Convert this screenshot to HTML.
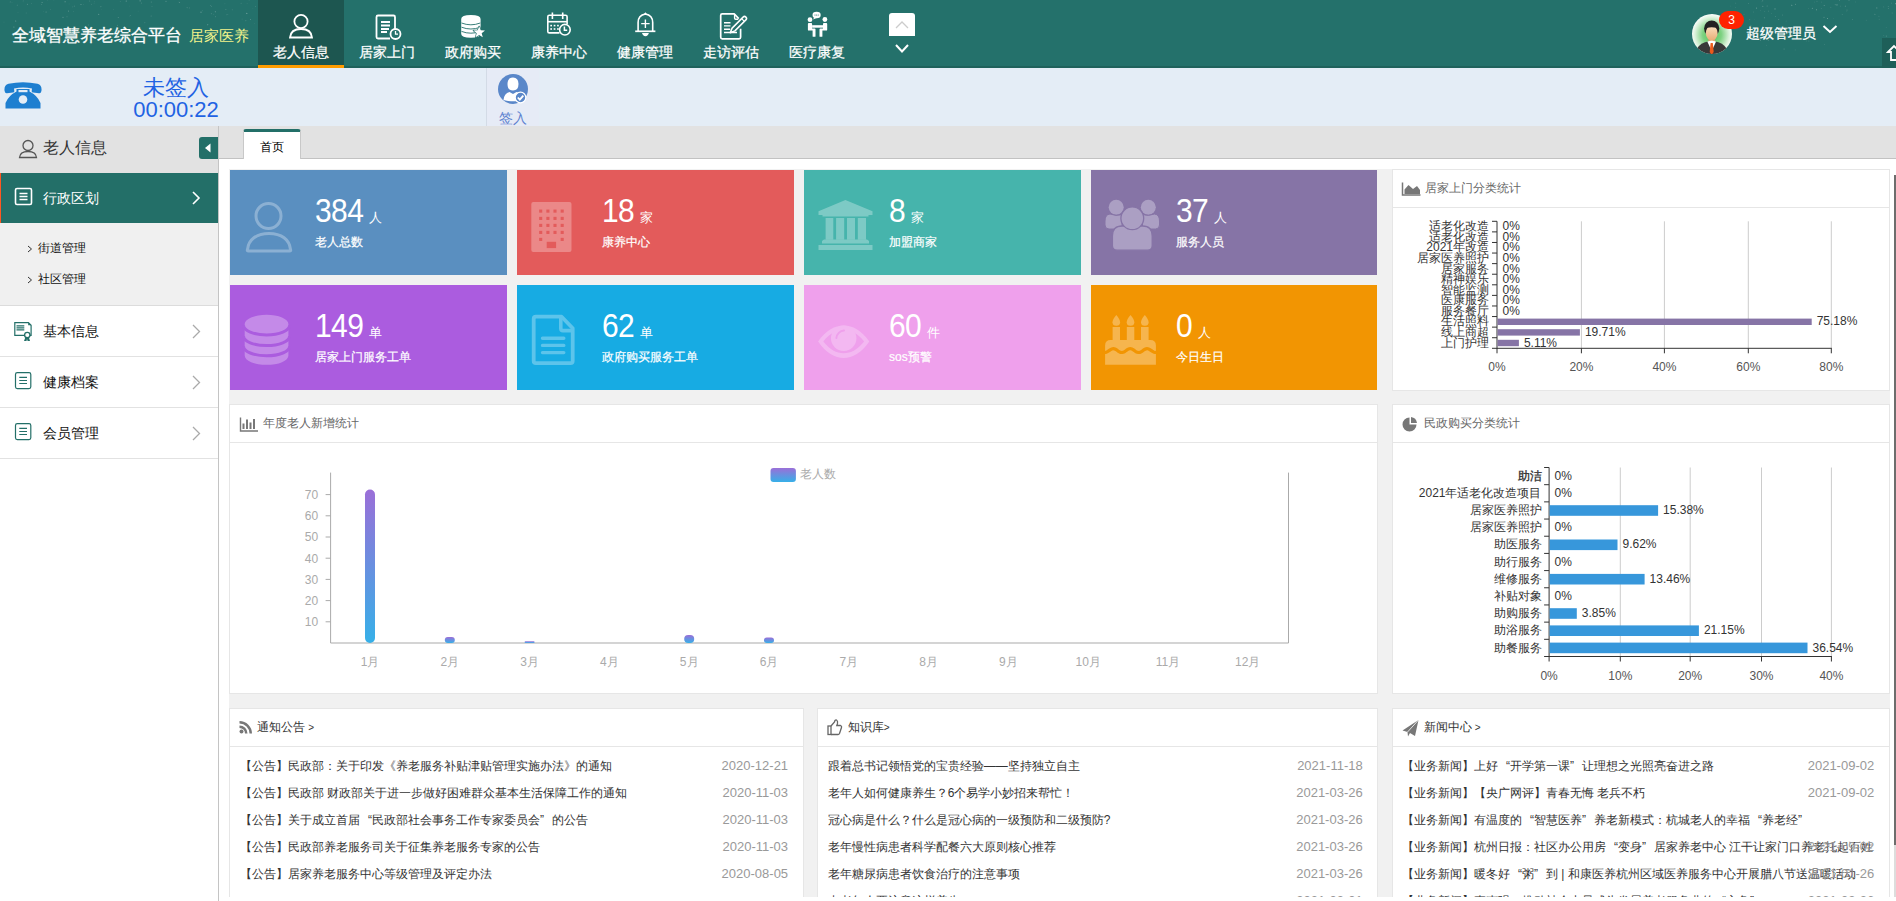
<!DOCTYPE html>
<html><head><meta charset="utf-8">
<style>
*{box-sizing:border-box;margin:0;padding:0}
html,body{width:1896px;height:901px;overflow:hidden;background:#fff;font-family:"Liberation Sans",sans-serif;color:#333}
.a{position:absolute}
#hdr{left:0;top:0;width:1896px;height:68px;background:#24716b;overflow:hidden}
#hdr .bl{left:0;top:66px;width:1896px;height:2px;background:#1f625c}
.nav{top:0;height:68px;width:86px;color:#fff;font-size:14px;text-align:center}
.nav.on{background:#1d5650;border-bottom:3px solid #ff9c00}
.nav span{position:absolute;left:0;width:86px;top:42px;line-height:20px;-webkit-text-stroke:0.25px #fff}
.nav svg{position:absolute;left:0;top:0}
#sub{left:0;top:68px;width:1896px;height:58px;background:#e4edf6}
#tabbar{left:219px;top:126px;width:1677px;height:33px;background:#e2e2e2;border-bottom:1px solid #c2c2c2}
#side{left:0;top:126px;width:219px;height:775px;background:#fff;border-right:1px solid #c4c4c4}
#content{left:219px;top:159px;width:1677px;height:738px;background:#fff;overflow:hidden}
.grey{background:#f1f1f1}
.card{color:#fff;overflow:hidden}
.card .num{position:absolute;left:85px;top:25px;font-size:30px;line-height:34px;white-space:nowrap;letter-spacing:-0.6px}
.card .num i{font-style:normal;display:inline-block;transform:scaleY(1.1);transform-origin:0 27px}
.card .num small{font-size:13px;margin-left:6px;letter-spacing:0}
.card .lbl{position:absolute;left:85px;top:63px;font-size:12px;line-height:18px;white-space:nowrap;-webkit-text-stroke:0.2px #fff}
.card svg{position:absolute;left:0;top:0}
.panel{background:#fff;border:1px solid #e6e6e6;overflow:hidden}
.ph{position:absolute;left:0;top:0;right:0;height:38px;border-bottom:1px solid #e6e6e6;font-size:12px;color:#666;line-height:37px;white-space:nowrap}
q1,q2{display:inline-block}
q1{padding-left:8px}q2{padding-right:8px}
.ph svg{position:absolute}
.ph b{font-weight:normal;position:absolute;top:0}
.li{position:absolute;font-size:12px;line-height:16px;white-space:nowrap;color:#333}
.dt{position:absolute;font-size:13px;line-height:16px;color:#999;text-align:right;white-space:nowrap}
.menu{position:absolute;left:0;width:218px;height:51px;border-bottom:1px solid #e2e2e2;font-size:14px;color:#111}
.menu span{position:absolute;left:43px;top:16px;line-height:18px}
.menu svg{position:absolute;left:0;top:0}
</style></head><body>

<!-- HEADER -->
<div id="hdr" class="a">
  <div class="a bl"></div>
  <div id="stars"><svg class="a" style="left:0;top:0" width="1896" height="66"><g fill="#fff"><circle cx="83.5" cy="4.5" r="0.32" fill-opacity="0.25"/><circle cx="94.3" cy="1.7" r="0.31" fill-opacity="0.22"/><circle cx="18.0" cy="12.4" r="0.34" fill-opacity="0.17"/><circle cx="161.9" cy="28.4" r="0.42" fill-opacity="0.35"/><circle cx="12.0" cy="2.2" r="0.34" fill-opacity="0.19"/><circle cx="210.6" cy="5.4" r="0.49" fill-opacity="0.21"/><circle cx="141.3" cy="3.1" r="0.50" fill-opacity="0.22"/><circle cx="81.0" cy="4.5" r="0.54" fill-opacity="0.29"/><circle cx="63.0" cy="17.2" r="0.56" fill-opacity="0.29"/><circle cx="74.3" cy="6.3" r="0.52" fill-opacity="0.16"/><circle cx="126.2" cy="1.2" r="0.53" fill-opacity="0.26"/><circle cx="225.9" cy="9.4" r="0.48" fill-opacity="0.26"/><circle cx="117.7" cy="25.2" r="0.44" fill-opacity="0.28"/><circle cx="15.7" cy="21.0" r="0.60" fill-opacity="0.32"/><circle cx="73.4" cy="11.6" r="0.31" fill-opacity="0.23"/><circle cx="43.4" cy="11.5" r="0.34" fill-opacity="0.18"/><circle cx="100.9" cy="6.7" r="0.46" fill-opacity="0.33"/><circle cx="211.4" cy="6.2" r="0.41" fill-opacity="0.33"/><circle cx="247.1" cy="3.5" r="0.37" fill-opacity="0.23"/><circle cx="152.0" cy="6.3" r="0.41" fill-opacity="0.26"/><circle cx="245.9" cy="20.7" r="0.49" fill-opacity="0.28"/><circle cx="13.9" cy="27.0" r="0.56" fill-opacity="0.31"/><circle cx="101.2" cy="9.5" r="0.32" fill-opacity="0.14"/><circle cx="53.9" cy="0.8" r="0.30" fill-opacity="0.16"/><circle cx="26.2" cy="13.1" r="0.49" fill-opacity="0.16"/><circle cx="65.1" cy="1.8" r="0.55" fill-opacity="0.36"/><circle cx="120.2" cy="1.5" r="0.41" fill-opacity="0.19"/><circle cx="213.8" cy="14.3" r="0.46" fill-opacity="0.16"/><circle cx="140.1" cy="0.8" r="0.59" fill-opacity="0.33"/><circle cx="179.6" cy="2.5" r="0.53" fill-opacity="0.25"/><circle cx="201.0" cy="12.2" r="0.59" fill-opacity="0.32"/><circle cx="208.0" cy="24.5" r="0.37" fill-opacity="0.25"/><circle cx="91.7" cy="4.2" r="0.38" fill-opacity="0.29"/><circle cx="246.8" cy="13.4" r="0.60" fill-opacity="0.35"/><circle cx="94.1" cy="3.0" r="0.36" fill-opacity="0.27"/><circle cx="232.3" cy="9.8" r="0.54" fill-opacity="0.14"/><circle cx="170.4" cy="27.3" r="0.52" fill-opacity="0.23"/><circle cx="46.1" cy="12.0" r="0.59" fill-opacity="0.22"/><circle cx="103.6" cy="28.4" r="0.35" fill-opacity="0.15"/><circle cx="39.0" cy="27.1" r="0.35" fill-opacity="0.32"/><circle cx="252.9" cy="8.2" r="0.34" fill-opacity="0.13"/><circle cx="250.5" cy="19.5" r="0.58" fill-opacity="0.22"/><circle cx="224.9" cy="3.8" r="0.39" fill-opacity="0.18"/><circle cx="151.3" cy="2.0" r="0.57" fill-opacity="0.20"/><circle cx="118.2" cy="17.5" r="0.43" fill-opacity="0.34"/><circle cx="129.4" cy="16.0" r="0.31" fill-opacity="0.23"/><circle cx="47.2" cy="0.1" r="0.35" fill-opacity="0.23"/><circle cx="187.1" cy="7.8" r="0.46" fill-opacity="0.31"/><circle cx="27.4" cy="4.2" r="0.53" fill-opacity="0.24"/><circle cx="144.9" cy="22.8" r="0.43" fill-opacity="0.27"/><circle cx="130.4" cy="15.4" r="0.43" fill-opacity="0.25"/><circle cx="123.3" cy="28.2" r="0.56" fill-opacity="0.35"/><circle cx="67.0" cy="16.8" r="0.55" fill-opacity="0.15"/><circle cx="31.4" cy="3.6" r="0.32" fill-opacity="0.28"/><circle cx="202.3" cy="10.7" r="0.49" fill-opacity="0.16"/><circle cx="227.8" cy="14.3" r="0.42" fill-opacity="0.23"/><circle cx="255.4" cy="6.5" r="0.46" fill-opacity="0.20"/><circle cx="50.5" cy="9.6" r="0.31" fill-opacity="0.25"/><circle cx="113.6" cy="9.4" r="0.45" fill-opacity="0.14"/><circle cx="254.2" cy="23.7" r="0.33" fill-opacity="0.19"/><circle cx="10.2" cy="1.9" r="0.43" fill-opacity="0.34"/><circle cx="211.3" cy="13.8" r="0.47" fill-opacity="0.29"/><circle cx="23.1" cy="1.7" r="0.43" fill-opacity="0.14"/><circle cx="242.1" cy="19.0" r="0.32" fill-opacity="0.32"/><circle cx="17.2" cy="5.1" r="0.46" fill-opacity="0.34"/><circle cx="69.1" cy="3.9" r="0.38" fill-opacity="0.14"/><circle cx="41.7" cy="4.7" r="0.39" fill-opacity="0.30"/><circle cx="74.8" cy="5.2" r="0.31" fill-opacity="0.18"/><circle cx="4.0" cy="22.0" r="0.36" fill-opacity="0.23"/><circle cx="241.1" cy="3.2" r="0.43" fill-opacity="0.24"/><circle cx="215.3" cy="11.8" r="0.51" fill-opacity="0.35"/><circle cx="88.4" cy="25.0" r="0.49" fill-opacity="0.22"/><circle cx="89.7" cy="1.1" r="0.52" fill-opacity="0.18"/><circle cx="42.1" cy="2.5" r="0.56" fill-opacity="0.28"/><circle cx="72.7" cy="6.9" r="0.35" fill-opacity="0.23"/><circle cx="67.9" cy="28.9" r="0.46" fill-opacity="0.18"/><circle cx="249.1" cy="0.0" r="0.41" fill-opacity="0.23"/><circle cx="129.7" cy="6.0" r="0.30" fill-opacity="0.19"/><circle cx="23.2" cy="0.3" r="0.39" fill-opacity="0.17"/><circle cx="151.1" cy="15.9" r="0.49" fill-opacity="0.29"/><circle cx="226.8" cy="14.8" r="0.35" fill-opacity="0.29"/><circle cx="166.0" cy="1.3" r="0.57" fill-opacity="0.27"/><circle cx="189.3" cy="7.9" r="0.45" fill-opacity="0.32"/><circle cx="207.6" cy="24.8" r="0.57" fill-opacity="0.28"/><circle cx="178.9" cy="2.0" r="0.41" fill-opacity="0.14"/><circle cx="215.6" cy="16.8" r="0.49" fill-opacity="0.28"/><circle cx="126.2" cy="0.1" r="0.52" fill-opacity="0.24"/><circle cx="138.1" cy="11.1" r="0.38" fill-opacity="0.14"/><circle cx="68.5" cy="11.1" r="0.59" fill-opacity="0.24"/><circle cx="98.7" cy="14.4" r="0.53" fill-opacity="0.27"/><circle cx="1836.7" cy="5.1" r="0.52" fill-opacity="0.19"/><circle cx="1824.2" cy="5.4" r="0.50" fill-opacity="0.29"/><circle cx="1842.2" cy="14.5" r="0.44" fill-opacity="0.23"/><circle cx="1749.7" cy="19.6" r="0.58" fill-opacity="0.13"/><circle cx="1806.2" cy="41.0" r="0.43" fill-opacity="0.19"/><circle cx="1764.8" cy="11.6" r="0.35" fill-opacity="0.25"/><circle cx="1888.2" cy="6.6" r="0.45" fill-opacity="0.33"/><circle cx="1846.8" cy="11.6" r="0.44" fill-opacity="0.13"/><circle cx="1730.6" cy="6.0" r="0.35" fill-opacity="0.20"/><circle cx="1782.5" cy="15.0" r="0.55" fill-opacity="0.15"/><circle cx="1883.8" cy="35.7" r="0.39" fill-opacity="0.21"/><circle cx="1795.2" cy="49.9" r="0.41" fill-opacity="0.22"/><circle cx="1775.7" cy="16.7" r="0.38" fill-opacity="0.34"/><circle cx="1771.4" cy="13.3" r="0.36" fill-opacity="0.21"/><circle cx="1888.7" cy="44.2" r="0.49" fill-opacity="0.34"/><circle cx="1886.2" cy="27.5" r="0.32" fill-opacity="0.29"/><circle cx="1804.8" cy="37.6" r="0.38" fill-opacity="0.13"/><circle cx="1883.8" cy="6.9" r="0.39" fill-opacity="0.30"/><circle cx="1892.1" cy="13.0" r="0.39" fill-opacity="0.25"/><circle cx="1795.5" cy="4.2" r="0.57" fill-opacity="0.24"/><circle cx="1766.5" cy="45.3" r="0.43" fill-opacity="0.16"/><circle cx="1761.9" cy="1.8" r="0.38" fill-opacity="0.18"/><circle cx="1824.6" cy="44.4" r="0.43" fill-opacity="0.22"/><circle cx="1817.0" cy="1.2" r="0.38" fill-opacity="0.35"/><circle cx="1750.9" cy="25.2" r="0.56" fill-opacity="0.17"/><circle cx="1775.0" cy="8.9" r="0.58" fill-opacity="0.32"/><circle cx="1874.9" cy="14.2" r="0.57" fill-opacity="0.23"/><circle cx="1827.5" cy="18.5" r="0.55" fill-opacity="0.32"/><circle cx="1891.4" cy="3.1" r="0.46" fill-opacity="0.28"/><circle cx="1886.3" cy="36.1" r="0.53" fill-opacity="0.23"/><circle cx="1821.5" cy="2.0" r="0.37" fill-opacity="0.34"/><circle cx="1837.2" cy="5.0" r="0.49" fill-opacity="0.29"/><circle cx="1748.6" cy="3.5" r="0.47" fill-opacity="0.22"/><circle cx="1767.1" cy="6.0" r="0.43" fill-opacity="0.35"/><circle cx="1837.0" cy="4.7" r="0.38" fill-opacity="0.35"/><circle cx="1847.0" cy="10.0" r="0.50" fill-opacity="0.22"/><circle cx="1772.7" cy="33.4" r="0.37" fill-opacity="0.13"/><circle cx="1786.1" cy="21.0" r="0.36" fill-opacity="0.31"/><circle cx="1852.7" cy="19.4" r="0.39" fill-opacity="0.32"/><circle cx="1768.3" cy="11.1" r="0.39" fill-opacity="0.35"/><circle cx="1812.3" cy="8.3" r="0.50" fill-opacity="0.35"/><circle cx="1754.3" cy="19.5" r="0.35" fill-opacity="0.13"/><circle cx="1740.0" cy="19.7" r="0.56" fill-opacity="0.29"/><circle cx="1895.6" cy="3.7" r="0.58" fill-opacity="0.30"/><circle cx="1735.3" cy="7.5" r="0.40" fill-opacity="0.16"/><circle cx="1730.5" cy="19.1" r="0.34" fill-opacity="0.35"/><circle cx="1764.4" cy="17.8" r="0.55" fill-opacity="0.22"/><circle cx="1738.2" cy="18.4" r="0.36" fill-opacity="0.21"/><circle cx="1878.9" cy="16.2" r="0.53" fill-opacity="0.13"/><circle cx="1735.8" cy="3.1" r="0.38" fill-opacity="0.30"/><circle cx="1879.2" cy="19.2" r="0.49" fill-opacity="0.18"/><circle cx="1849.0" cy="0.1" r="0.52" fill-opacity="0.34"/><circle cx="1835.2" cy="4.7" r="0.44" fill-opacity="0.35"/><circle cx="1888.3" cy="8.6" r="0.45" fill-opacity="0.34"/><circle cx="1760.4" cy="40.1" r="0.55" fill-opacity="0.31"/><circle cx="1830.8" cy="7.2" r="0.53" fill-opacity="0.14"/><circle cx="1762.8" cy="1.3" r="0.31" fill-opacity="0.25"/><circle cx="1784.1" cy="49.0" r="0.60" fill-opacity="0.19"/><circle cx="1744.0" cy="14.2" r="0.43" fill-opacity="0.17"/><circle cx="1799.2" cy="31.0" r="0.52" fill-opacity="0.32"/><circle cx="1840.3" cy="6.1" r="0.39" fill-opacity="0.26"/><circle cx="1791.9" cy="4.9" r="0.38" fill-opacity="0.16"/><circle cx="1876.8" cy="7.9" r="0.60" fill-opacity="0.24"/><circle cx="1768.4" cy="40.4" r="0.60" fill-opacity="0.14"/><circle cx="1808.8" cy="41.0" r="0.58" fill-opacity="0.13"/><circle cx="1778.8" cy="19.5" r="0.47" fill-opacity="0.34"/><circle cx="1791.8" cy="5.2" r="0.53" fill-opacity="0.35"/><circle cx="1747.6" cy="29.8" r="0.37" fill-opacity="0.21"/><circle cx="1753.5" cy="12.0" r="0.49" fill-opacity="0.17"/><circle cx="1731.9" cy="16.4" r="0.35" fill-opacity="0.19"/><circle cx="1763.8" cy="39.8" r="0.32" fill-opacity="0.14"/><circle cx="1795.6" cy="27.5" r="0.33" fill-opacity="0.16"/><circle cx="1845.4" cy="6.2" r="0.58" fill-opacity="0.19"/><circle cx="1824.0" cy="17.3" r="0.60" fill-opacity="0.21"/><circle cx="1762.7" cy="0.1" r="0.57" fill-opacity="0.22"/><circle cx="1866.2" cy="20.3" r="0.43" fill-opacity="0.16"/><circle cx="1732.5" cy="27.6" r="0.57" fill-opacity="0.14"/><circle cx="1833.3" cy="18.5" r="0.35" fill-opacity="0.19"/><circle cx="1816.5" cy="9.8" r="0.54" fill-opacity="0.35"/><circle cx="1762.8" cy="6.3" r="0.59" fill-opacity="0.23"/><circle cx="1738.9" cy="18.1" r="0.49" fill-opacity="0.32"/><circle cx="1756.6" cy="8.1" r="0.55" fill-opacity="0.32"/><circle cx="1760.4" cy="10.4" r="0.41" fill-opacity="0.15"/><circle cx="1771.0" cy="36.2" r="0.32" fill-opacity="0.25"/><circle cx="1855.7" cy="1.9" r="0.34" fill-opacity="0.26"/><circle cx="1821.3" cy="8.4" r="0.47" fill-opacity="0.22"/><circle cx="1839.4" cy="0.5" r="0.49" fill-opacity="0.24"/><circle cx="1769.1" cy="38.2" r="0.43" fill-opacity="0.16"/><circle cx="1808.6" cy="8.6" r="0.33" fill-opacity="0.23"/><circle cx="1814.7" cy="2.0" r="0.32" fill-opacity="0.29"/></g></svg></div>
  <div class="a" style="left:12px;top:24px;font-size:17px;line-height:24px;color:#fff;white-space:nowrap;-webkit-text-stroke:0.3px #fff">全域智慧养老综合平台</div>
  <div class="a" style="left:189px;top:25px;font-size:15px;line-height:22px;color:#f3f48c;white-space:nowrap;font-family:'Liberation Serif',serif">居家医养</div>
  <div class="a nav on" style="left:258px"><svg width="86" height="68"><g fill="none" stroke="#fff" stroke-width="1.8"><circle cx="43" cy="21.5" r="6.6"/><path d="M32 37.5 C32.5 31.5 37 29 43 29 C49 29 53.5 31.5 54 37.5 Z"/></g></svg><span>老人信息</span></div>
  <div class="a nav" style="left:344px"><svg width="86" height="68"><g fill="none" stroke="#fff" stroke-width="1.8"><path d="M51 30 V17 Q51 15.5 49.5 15.5 H34 Q32.5 15.5 32.5 17 V37 Q32.5 38.5 34 38.5 H46"/><path d="M37 22 H46 M37 25.5 H46 M37 29 H45 M37 32 H43"/><circle cx="51.5" cy="34" r="5"/><path d="M51.5 31 V34.2 H54" stroke-width="1.3"/></g></svg><span>居家上门</span></div>
  <div class="a nav" style="left:430px"><svg width="86" height="68"><path d="M31.2 19 Q31.2 15 40.9 15 Q50.6 15 50.6 19 V34 Q50.6 37.7 40.9 37.7 Q31.2 37.7 31.2 34 Z" fill="#fff"/><g fill="none" stroke="#24716b" stroke-width="0.9"><path d="M31.5 23 Q40.9 26.6 50.3 23"/><path d="M31.5 27.2 Q40.9 30.8 50.3 27.2"/><path d="M31.5 31.4 Q40.9 35 50.3 31.4"/></g><path d="M49.20 26.30 L50.73 30.30 L55.00 30.51 L51.67 33.20 L52.79 37.34 L49.20 35.00 L45.61 37.34 L46.73 33.20 L43.40 30.51 L47.67 30.30 Z" fill="#fff" stroke="#24716b" stroke-width="1.3" stroke-linejoin="round"/><path d="M49.20 26.30 L50.73 30.30 L55.00 30.51 L51.67 33.20 L52.79 37.34 L49.20 35.00 L45.61 37.34 L46.73 33.20 L43.40 30.51 L47.67 30.30 Z" fill="#fff"/></svg><span>政府购买</span></div>
  <div class="a nav" style="left:516px"><svg width="86" height="68"><g fill="none" stroke="#fff" stroke-width="1.6"><path d="M43.5 32.9 H33.3 Q31.8 32.9 31.8 31.4 V16.8 Q31.8 15.3 33.3 15.3 H49.6 Q51.1 15.3 51.1 16.8 V24"/><path d="M31.8 21.7 H51.1"/><path d="M36.4 12.6 V19 M46.7 12.6 V19"/><circle cx="48.9" cy="29.7" r="5.3"/><path d="M48.4 26.6 V30.3 H51.2" stroke-width="1.5"/></g><g fill="#fff"><rect x="34.3" y="24.8" width="1.7" height="1.6"/><rect x="37.7" y="24.8" width="1.7" height="1.6"/><rect x="41.1" y="24.8" width="1.7" height="1.6"/><rect x="34.3" y="28.2" width="1.7" height="1.6"/><rect x="37.7" y="28.2" width="1.7" height="1.6"/><rect x="41.1" y="28.2" width="1.7" height="1.6"/></g></svg><span>康养中心</span></div>
  <div class="a nav" style="left:602px"><svg width="86" height="68"><g fill="none" stroke="#fff"><path d="M36.1 31 V22.5 Q36.1 15.3 43.4 14 Q50.7 15.3 50.7 22.5 V31" stroke-width="1.6"/><path d="M33.2 31.3 H53.4" stroke-width="1.7"/><path d="M43.4 19.4 V27.9 M39.2 23.6 H47.6" stroke-width="1.4"/></g><g fill="#fff"><path d="M41.6 14.6 L43.4 12.2 L45.2 14.6 Z"/><path d="M40 33.1 H46.9 Q46.1 36.2 43.45 36.2 Q40.8 36.2 40 33.1 Z"/></g></svg><span>健康管理</span></div>
  <div class="a nav" style="left:688px"><svg width="86" height="68"><g fill="none" stroke="#fff" stroke-linejoin="round"><path d="M52.6 28.8 V37.3 Q52.6 38.8 51.1 38.8 H34.2 Q32.7 38.8 32.7 37.3 V15.4 Q32.7 13.9 34.2 13.9 H46.2 L50.8 18.6" stroke-width="1.7"/><path d="M46.6 14.6 V18.2 Q46.6 19.3 47.7 19.3 H50.2" stroke-width="1.4"/><path d="M36 22.8 H42.5 M36 25.9 H42.5 M36 29.2 H42.2 M36 32.5 H49" stroke-width="1.4"/><path d="M44.1 28.1 L55.1 17.1 Q56.5 15.7 57.9 17.1 Q59.3 18.5 57.9 19.9 L46.9 30.9 L42.2 32.8 Z" stroke-width="1.5"/><path d="M53.6 18.6 L56.4 21.4" stroke-width="1.2"/></g></svg><span>走访评估</span></div>
  <div class="a nav" style="left:774px"><svg width="86" height="68"><g fill="#fff"><circle cx="36" cy="19.7" r="2.4"/><circle cx="50.9" cy="19.5" r="2.4"/><path d="M33.9 24 Q33.9 23.1 34.8 23.1 H37.2 Q38.1 23.1 38.1 24 V28.4 H40.6 Q41.5 28.4 41.5 29.3 V36.2 Q41.5 36.8 40.9 36.8 H39.2 Q38.6 36.8 38.6 36.2 V30.6 H34.8 Q33.9 30.6 33.9 29.7 Z"/><path d="M53.2 24 Q53.2 23.1 52.3 23.1 H49.9 Q49 23.1 49 24 V28.4 H46.4 Q45.5 28.4 45.5 29.3 V36.2 Q45.5 36.8 46.1 36.8 H47.8 Q48.4 36.8 48.4 36.2 V30.6 H52.3 Q53.2 30.6 53.2 29.7 Z"/><rect x="38.1" y="25.2" width="10.9" height="2.5"/><ellipse cx="42.6" cy="15" rx="4.1" ry="3.2"/><path d="M40.2 17 L39.2 19.6 L42.6 17.9 Z"/></g><g fill="#24716b"><circle cx="41" cy="15" r="0.55"/><circle cx="42.6" cy="15" r="0.55"/><circle cx="44.2" cy="15" r="0.55"/></g></svg><span>医疗康复</span></div>
  <div class="a" style="left:889px;top:13px;width:26px;height:23px;background:#fff;border-radius:3px 3px 0 0"><svg width="26" height="23" style="position:absolute;left:0;top:0"><path d="M7 15 L13 9 L19 15" fill="none" stroke="#ccc" stroke-width="1.3"/></svg></div>
  <svg class="a" style="left:889px;top:40px" width="26" height="16"><path d="M7 5 L13 11.5 L19 5" fill="none" stroke="#fff" stroke-width="2"/></svg>
  <!-- avatar -->
  <div class="a" style="left:1692px;top:14px;width:40px;height:40px;border-radius:50%;overflow:hidden;background:radial-gradient(circle 21px at 50% 52%,#4fc456 0%,#7fd283 45%,#d8f1d8 80%,#fff 100%)">
    <svg width="40" height="40" style="position:absolute;left:0;top:0"><defs><linearGradient id="fc" x1="0" y1="0" x2="0" y2="1"><stop offset="0" stop-color="#fbe0bd"/><stop offset="1" stop-color="#e8ae78"/></linearGradient></defs><path d="M3.5 38 Q5.5 31 13 28.3 L19.7 26.8 L26.5 28.3 Q34 31 36 38 L34 41 H5 Z" fill="#383838"/><rect x="16.4" y="23" width="6.6" height="5" fill="#dda66f"/><path d="M15.3 27.4 L19.7 37 L24.1 27.4 L19.7 26.5 Z" fill="#fff"/><path d="M18.6 29 H20.8 L21.7 38 L19.7 41 L17.7 38 Z" fill="#ec5a1c"/><ellipse cx="19.7" cy="14.5" rx="7.6" ry="8" fill="#222"/><ellipse cx="19.7" cy="19" rx="5.9" ry="7.3" fill="url(#fc)"/><path d="M13.8 16.5 Q14 10.5 19.7 10.8 Q25.4 10.5 25.6 16.5 L24.5 13.8 Q19.7 12.5 14.9 13.8 Z" fill="#222"/></svg>
  </div>
  <div class="a" style="left:1719px;top:11px;width:25px;height:18px;border-radius:9px;background:#ff2200;color:#fff;font-size:12px;line-height:18px;text-align:center">3</div>
  <div class="a" style="left:1746px;top:23px;font-size:14px;line-height:20px;color:#fff;white-space:nowrap;-webkit-text-stroke:0.25px #fff">超级管理员</div>
  <svg class="a" style="left:1820px;top:20px" width="20" height="16"><path d="M3.5 6 L10 12 L16.5 6" fill="none" stroke="#fff" stroke-width="2"/></svg>
  <div class="a" style="left:1882px;top:38px;width:14px;height:30px;background:#1e5f59"></div>
  <svg class="a" style="left:1882px;top:38px" width="14" height="30"><path d="M6 14 L12 8 L18 14 H15 V22 H9 V14 Z" fill="none" stroke="#fff" stroke-width="1.8"/></svg>
</div>

<!-- SUB HEADER -->
<div id="sub" class="a">
  <svg class="a" style="left:4px;top:14px" width="38" height="27" viewBox="0 0 38 27"><path d="M0.5 8.5 Q0 3 4.5 1.8 Q19 -1.5 33.5 1.8 Q38 3 37.5 8.5 L37 10.3 Q36.5 11.3 35 11.2 L29 10.6 Q27.5 10.4 27.7 8.9 L28 6.6 Q19 4.6 10 6.6 L10.3 8.9 Q10.5 10.4 9 10.6 L3 11.2 Q1.5 11.3 1 10.3 Z" fill="#1e7fd0"/><path d="M12.5 7 H25.5 V9.5 Q33.5 13.5 36.5 21 V26.5 H1.5 V21 Q4.5 13.5 12.5 9.5 Z" fill="#1e7fd0"/><circle cx="19" cy="17.5" r="4.3" fill="#e4edf6"/><rect x="14.5" y="8" width="9" height="2.2" fill="#e4edf6"/></svg>
  <div class="a" style="left:134px;top:7px;width:84px;text-align:center;font-size:22px;line-height:26px;color:#1f63e3;white-space:nowrap">未签入</div>
  <div class="a" style="left:132px;top:29px;width:88px;text-align:center;font-size:22px;line-height:26px;color:#1f63e3;white-space:nowrap">00:00:22</div>
  <div class="a" style="left:486px;top:0;width:1px;height:58px;background:#d3dbe6"></div>
  <div class="a" style="left:487px;top:0;width:52px;height:58px;background:#e6ebf6"></div>
  <svg class="a" style="left:497px;top:5px" width="32" height="32" viewBox="0 0 32 32"><circle cx="16" cy="16" r="15" fill="#5a87c9"/><path d="M16 4.5 Q21.5 4.5 21.5 11 Q21.5 17.5 16 17.5 Q10.5 17.5 10.5 11 Q10.5 4.5 16 4.5 Z" fill="#fff"/><path d="M6.5 27 Q7 20.5 12.5 19 L16 21 L19.5 19 Q24 20 25 24 L22 28 Q14 29 6.5 27 Z" fill="#fff"/><circle cx="23.5" cy="24.5" r="5.3" fill="#5a87c9" stroke="#fff" stroke-width="1.2"/><path d="M20.8 24.5 L22.8 26.6 L26.3 22.6" fill="none" stroke="#fff" stroke-width="1.8"/></svg>
  <div class="a" style="left:499px;top:41px;font-size:14px;line-height:18px;color:#5a80cf;white-space:nowrap">签入</div>
</div>

<!-- SIDEBAR -->
<div id="side" class="a">
  <div class="a" style="left:0;top:0;width:218px;height:47px;background:#e2e2e2"></div>
  <svg class="a" style="left:17px;top:12px" width="22" height="22"><g fill="none" stroke="#555" stroke-width="1.3"><circle cx="11" cy="7.5" r="5"/><path d="M2.5 19.5 Q3 13.5 11 13.5 Q19 13.5 19.5 19.5 Z"/></g></svg>
  <div class="a" style="left:43px;top:11px;font-size:16px;line-height:22px;color:#333;white-space:nowrap">老人信息</div>
  <div class="a" style="left:199px;top:11px;width:19px;height:22px;background:#236f68;border-radius:3px 0 0 3px"><svg width="19" height="22" style="position:absolute;left:0;top:0"><path d="M11.5 6.5 V15.5 L6 11 Z" fill="#fff"/></svg></div>
  <div class="a" style="left:0;top:47px;width:218px;height:50px;background:#236f68;border-left:1px solid #ff5722"></div>
  <svg class="a" style="left:14px;top:61px" width="20" height="20"><g fill="none" stroke="#fff" stroke-width="1.6"><rect x="1.5" y="1.5" width="16" height="16" rx="1.5"/><path d="M5.5 6.5 H13.5 M5.5 9.5 H13.5 M5.5 12.5 H13.5"/></g></svg>
  <div class="a" style="left:43px;top:63px;font-size:14px;line-height:18px;color:#fff;white-space:nowrap">行政区划</div>
  <svg class="a" style="left:188px;top:63px" width="16" height="18"><path d="M5 3 L11 9 L5 15" fill="none" stroke="#fff" stroke-width="1.6"/></svg>
  <div class="a" style="left:0;top:97px;width:218px;height:83px;background:#f0f0f0;border-bottom:1px solid #dcdcdc"></div>
  <svg class="a" style="left:26px;top:119px" width="8" height="8"><path d="M2 1 L5.5 4 L2 7" fill="none" stroke="#333" stroke-width="1"/></svg><div class="a" style="left:38px;top:114px;font-size:12px;line-height:16px;color:#111;white-space:nowrap">街道管理</div>
  <svg class="a" style="left:26px;top:150px" width="8" height="8"><path d="M2 1 L5.5 4 L2 7" fill="none" stroke="#333" stroke-width="1"/></svg><div class="a" style="left:38px;top:145px;font-size:12px;line-height:16px;color:#111;white-space:nowrap">社区管理</div>
  <div class="menu" style="top:180px"><svg width="218" height="51"><g fill="none" stroke="#236f68" stroke-width="1.2"><path d="M14.8 16.6 H28.4 L31.1 19.3 V29.4 H14.8 Z"/><path d="M16.5 19.8 H24.3 M16.5 21.9 H24.3 M16.5 23.9 H24.3"/></g><path d="M28.2 16.6 V19.3 H31" fill="#236f68"/><circle cx="27.3" cy="29" r="2.7" fill="#fff" stroke="#236f68" stroke-width="1.3"/><path d="M25.5 31 L24 35 H26.5 L27 33 L27.6 35 H30 L28.8 31 Z" fill="#236f68"/><path d="M193 19 L199.5 25.5 L193 32" fill="none" stroke="#aaa" stroke-width="1.3"/></svg><span>基本信息</span></div>
  <div class="menu" style="top:231px"><svg width="218" height="51"><g fill="none" stroke="#236f68" stroke-width="1.2"><rect x="15.5" y="15.6" width="15.3" height="16" rx="1.8"/><path d="M19.3 20.4 H27 M19.3 23.5 H27 M19.3 26.5 H27"/></g><path d="M193 19 L199.5 25.5 L193 32" fill="none" stroke="#aaa" stroke-width="1.3"/></svg><span>健康档案</span></div>
  <div class="menu" style="top:282px"><svg width="218" height="51"><g fill="none" stroke="#236f68" stroke-width="1.2"><rect x="15.5" y="15.6" width="15.3" height="16" rx="1.8"/><path d="M19.3 20.4 H27 M19.3 23.5 H27 M19.3 26.5 H27"/></g><path d="M193 19 L199.5 25.5 L193 32" fill="none" stroke="#aaa" stroke-width="1.3"/></svg><span>会员管理</span></div>
</div>

<!-- TAB BAR -->
<div id="tabbar" class="a">
  <div class="a" style="left:24px;top:3px;width:58px;height:30px;background:#fff;border-top:3px solid #236f68;border-left:1px solid #c8c8c8;border-right:1px solid #c8c8c8;border-radius:3px 3px 0 0;font-size:12px;line-height:30px;text-align:center;color:#000">首页</div>
</div>

<!-- CONTENT -->
<div id="content" class="a">
  <div class="a grey" style="left:10px;top:10px;width:1661px;height:730px"></div>
  <!-- CARDS -->
  <div class="a card" style="left:11px;top:11px;width:277px;height:105px;background:#5a8fc0">
    <svg width="100" height="105"><g fill="none" stroke="rgba(255,255,255,0.3)" stroke-width="3"><circle cx="38.5" cy="46" r="12.5"/><path d="M17.5 79.5 Q16.8 81 18.5 81 H59.5 Q61.2 81 60.5 79.5 C59.5 69.5 51.5 63.5 39 63.5 C26.5 63.5 18.5 69.5 17.5 79.5 Z" stroke-linejoin="round"/></g></svg>
    <div class="num"><i>384</i><small>人</small></div><div class="lbl">老人总数</div></div>
  <div class="a card" style="left:298px;top:11px;width:277px;height:105px;background:#e35b5b">
    <svg width="100" height="105"><rect x="14.3" y="32" width="40.2" height="50" rx="2" fill="rgba(255,255,255,0.28)"/><g fill="#e35b5b"><rect x="22.15" y="39.55" width="3.1" height="3.1"/><rect x="29.35" y="39.55" width="3.1" height="3.1"/><rect x="36.45" y="39.55" width="3.1" height="3.1"/><rect x="43.65" y="39.55" width="3.1" height="3.1"/><rect x="22.15" y="46.85" width="3.1" height="3.1"/><rect x="29.35" y="46.85" width="3.1" height="3.1"/><rect x="36.45" y="46.85" width="3.1" height="3.1"/><rect x="43.65" y="46.85" width="3.1" height="3.1"/><rect x="22.15" y="53.85" width="3.1" height="3.1"/><rect x="29.35" y="53.85" width="3.1" height="3.1"/><rect x="36.45" y="53.85" width="3.1" height="3.1"/><rect x="43.65" y="53.85" width="3.1" height="3.1"/><rect x="22.15" y="60.85" width="3.1" height="3.1"/><rect x="29.35" y="60.85" width="3.1" height="3.1"/><rect x="36.45" y="60.85" width="3.1" height="3.1"/><rect x="43.65" y="60.85" width="3.1" height="3.1"/><rect x="22.15" y="67.85" width="3.1" height="3.1"/><rect x="43.65" y="67.85" width="3.1" height="3.1"/><rect x="29.7" y="71.8" width="9.4" height="6.3"/></g></svg>
    <div class="num"><i>18</i><small>家</small></div><div class="lbl">康养中心</div></div>
  <div class="a card" style="left:585px;top:11px;width:277px;height:105px;background:#46b4ac">
    <svg width="100" height="105"><g fill="rgba(255,255,255,0.3)"><path d="M41.4 30 L68.5 41.2 V45 H64.5 V46.5 H18.5 V45 H14.5 V41.2 Z"/><rect x="21.6" y="48" width="7.7" height="21.5"/><rect x="32.1" y="48" width="8.1" height="21.5"/><rect x="43" y="48" width="8" height="21.5"/><rect x="53.8" y="48" width="8.2" height="21.5"/><path d="M20 69.5 H63 L65 71 V73.5 H18 V71 Z"/><rect x="14.5" y="75" width="54" height="5"/></g></svg>
    <div class="num"><i>8</i><small>家</small></div><div class="lbl">加盟商家</div></div>
  <div class="a card" style="left:872px;top:11px;width:286px;height:105px;background:#8674a6">
    <svg width="100" height="105"><g fill="#ab9fc3"><circle cx="25.2" cy="37.3" r="7.5"/><circle cx="57.3" cy="37.3" r="7.5"/><path d="M14 51 Q14 44.5 19 44 Q25 46.5 31 44.5 V59 H18 Q14 59 14 55 Z" stroke="#8674a6" stroke-width="1"/><path d="M68.5 51 Q68.5 44.5 63.5 44 Q57.5 46.5 51.5 44.5 V59 H64.5 Q68.5 59 68.5 55 Z" stroke="#8674a6" stroke-width="1"/><path d="M21.4 66 Q21.4 56 31 56 H51.6 Q61.2 56 61.2 66 V75.5 Q61.2 80.2 56.5 80.2 H26.1 Q21.4 80.2 21.4 75.5 Z" stroke="#8674a6" stroke-width="1.3"/><circle cx="41.3" cy="48.3" r="11.4" stroke="#8674a6" stroke-width="1.3"/></g></svg>
    <div class="num"><i>37</i><small>人</small></div><div class="lbl">服务人员</div></div>
  <div class="a card" style="left:11px;top:126px;width:277px;height:105px;background:#ab5cdf">
    <svg width="100" height="105"><path d="M14.7 39 A21.85 9.25 0 0 1 58.4 39 V70.6 A21.85 9.25 0 0 1 14.7 70.6 Z" fill="#c48ae8"/><g fill="none" stroke="#ab5cdf" stroke-width="3"><path d="M13.5 40.3 A23 9.6 0 0 0 59.6 40.3"/><path d="M13.5 51 A23 9.6 0 0 0 59.6 51"/><path d="M13.5 61.2 A23 9.6 0 0 0 59.6 61.2"/></g></svg>
    <div class="num"><i>149</i><small>单</small></div><div class="lbl">居家上门服务工单</div></div>
  <div class="a card" style="left:298px;top:126px;width:277px;height:105px;background:#17abe3">
    <svg width="100" height="105"><g fill="none" stroke="#5dc4eb" stroke-linejoin="round" stroke-linecap="round"><path d="M16.7 33.9 Q16.7 31.7 18.9 31.7 H44.6 L55.7 43.2 V76 Q55.7 78.2 53.5 78.2 H18.9 Q16.7 78.2 16.7 76 Z" stroke-width="3.8"/><path d="M43.8 32.8 V43.4 Q43.8 45.6 46 45.6 H55" stroke-width="3.6"/><path d="M25.5 53.2 H46.8 M25.5 60.4 H46.8 M25.5 67.6 H46.8" stroke-width="3.4"/></g></svg>
    <div class="num"><i>62</i><small>单</small></div><div class="lbl">政府购买服务工单</div></div>
  <div class="a card" style="left:585px;top:126px;width:277px;height:105px;background:#efa0ec">
    <svg width="100" height="105"><g fill="#f3b8f1"><path fill-rule="evenodd" d="M14.1 56.5 C22 45 31 40.5 39.7 40.5 C48.4 40.5 57.4 45 65.3 56.5 C57.4 68 48.4 73 39.7 73 C31 73 22 68 14.1 56.5 Z M19.3 56.5 C25.8 48.3 32.4 45.3 39.7 45.3 C47 45.3 53.6 48.3 60.1 56.5 C53.6 64.7 47 68.2 39.7 68.2 C32.4 68.2 25.8 64.7 19.3 56.5 Z"/><circle cx="39.7" cy="53.2" r="12.7"/></g><path d="M32.4 53 A 8.2 8.2 0 0 1 40 45.6" fill="none" stroke="#efa0ec" stroke-width="2" stroke-linecap="round"/></svg>
    <div class="num"><i>60</i><small>件</small></div><div class="lbl">sos预警</div></div>
  <div class="a card" style="left:872px;top:126px;width:286px;height:105px;background:#f29502">
    <svg width="100" height="105"><g fill="#f6b54e"><path d="M25.3 30 Q29.1 34.3 29.1 37.2 Q29.1 40.8 25.3 40.8 Q21.5 40.8 21.5 37.2 Q21.5 34.3 25.3 30 Z"/><path d="M39.5 30 Q43.3 34.3 43.3 37.2 Q43.3 40.8 39.5 40.8 Q35.7 40.8 35.7 37.2 Q35.7 34.3 39.5 30 Z"/><path d="M53.8 30 Q57.599999999999994 34.3 57.599999999999994 37.2 Q57.599999999999994 40.8 53.8 40.8 Q50.0 40.8 50.0 37.2 Q50.0 34.3 53.8 30 Z"/><rect x="21.6" y="42" width="7.4" height="14"/><rect x="35.8" y="42" width="7.5" height="14"/><rect x="50" y="42" width="7.6" height="14"/><path d="M14.1 60.5 Q14.1 55 19.6 55 H59.4 Q64.9 55 64.9 60.5 V79.8 H14.1 Z"/></g><polyline points="12.0,67.07 12.8,67.36 13.6,67.49 14.4,67.46 15.2,67.27 16.0,66.92 16.8,66.47 17.6,65.93 18.4,65.37 19.2,64.83 20.0,64.35 20.8,63.99 21.6,63.76 22.4,63.70 23.2,63.81 24.0,64.07 24.8,64.46 25.6,64.96 26.4,65.51 27.2,66.07 28.0,66.59 28.8,67.02 29.6,67.33 30.4,67.48 31.2,67.47 32.0,67.30 32.8,66.97 33.6,66.53 34.4,66.00 35.2,65.44 36.0,64.89 36.8,64.41 37.6,64.03 38.4,63.78 39.2,63.70 40.0,63.78 40.8,64.03 41.6,64.41 42.4,64.89 43.2,65.44 44.0,66.00 44.8,66.53 45.6,66.97 46.4,67.30 47.2,67.47 48.0,67.48 48.8,67.33 49.6,67.02 50.4,66.59 51.2,66.07 52.0,65.51 52.8,64.96 53.6,64.46 54.4,64.07 55.2,63.81 56.0,63.70 56.8,63.76 57.6,63.99 58.4,64.35 59.2,64.83 60.0,65.37 60.8,65.93 61.6,66.47 62.4,66.92 63.2,67.27 64.0,67.46 64.8,67.49 65.6,67.36 66.4,67.07" fill="none" stroke="#f29502" stroke-width="3.2"/></svg>
    <div class="num"><i>0</i><small>人</small></div><div class="lbl">今日生日</div></div>
<!--PANELS-->
<div class="a panel" style="left:1173px;top:10px;width:498px;height:222px"><div class="ph"><svg width="40" height="38" style="left:-1px;top:-1px"><path d="M10.5 13.5 V26 H28.5" fill="none" stroke="#777" stroke-width="1.5"/><path d="M12.5 25 V20.5 L16.5 16 L21 20 L25 17 L28 21 V25 Z" fill="#777"/></svg><b style="left:32px">居家上门分类统计</b></div><svg width="498" height="222" style="position:absolute;left:0;top:0" font-family="Liberation Sans, sans-serif" font-size="12"><line x1="188.4000000000001" y1="51.30000000000001" x2="188.4000000000001" y2="178.3" stroke="#ccc" stroke-width="1"/><line x1="271.4000000000001" y1="51.30000000000001" x2="271.4000000000001" y2="178.3" stroke="#ccc" stroke-width="1"/><line x1="355.29999999999995" y1="51.30000000000001" x2="355.29999999999995" y2="178.3" stroke="#ccc" stroke-width="1"/><line x1="438.29999999999995" y1="51.30000000000001" x2="438.29999999999995" y2="178.3" stroke="#ccc" stroke-width="1"/><line x1="104" y1="51.30000000000001" x2="104" y2="178.8" stroke="#333" stroke-width="1"/><line x1="104" y1="178.3" x2="438.79999999999995" y2="178.3" stroke="#333" stroke-width="1"/><line x1="99" y1="51.30" x2="104" y2="51.30" stroke="#333" stroke-width="1"/><line x1="99" y1="61.88" x2="104" y2="61.88" stroke="#333" stroke-width="1"/><line x1="99" y1="72.47" x2="104" y2="72.47" stroke="#333" stroke-width="1"/><line x1="99" y1="83.05" x2="104" y2="83.05" stroke="#333" stroke-width="1"/><line x1="99" y1="93.63" x2="104" y2="93.63" stroke="#333" stroke-width="1"/><line x1="99" y1="104.22" x2="104" y2="104.22" stroke="#333" stroke-width="1"/><line x1="99" y1="114.80" x2="104" y2="114.80" stroke="#333" stroke-width="1"/><line x1="99" y1="125.38" x2="104" y2="125.38" stroke="#333" stroke-width="1"/><line x1="99" y1="135.97" x2="104" y2="135.97" stroke="#333" stroke-width="1"/><line x1="99" y1="146.55" x2="104" y2="146.55" stroke="#333" stroke-width="1"/><line x1="99" y1="157.13" x2="104" y2="157.13" stroke="#333" stroke-width="1"/><line x1="99" y1="167.72" x2="104" y2="167.72" stroke="#333" stroke-width="1"/><line x1="99" y1="178.30" x2="104" y2="178.30" stroke="#333" stroke-width="1"/><line x1="104" y1="178.3" x2="104" y2="183.3" stroke="#333" stroke-width="1"/><text x="104" y="201.2" text-anchor="middle" fill="#555">0%</text><line x1="188.4000000000001" y1="178.3" x2="188.4000000000001" y2="183.3" stroke="#333" stroke-width="1"/><text x="188.4000000000001" y="201.2" text-anchor="middle" fill="#555">20%</text><line x1="271.4000000000001" y1="178.3" x2="271.4000000000001" y2="183.3" stroke="#333" stroke-width="1"/><text x="271.4000000000001" y="201.2" text-anchor="middle" fill="#555">40%</text><line x1="355.29999999999995" y1="178.3" x2="355.29999999999995" y2="183.3" stroke="#333" stroke-width="1"/><text x="355.29999999999995" y="201.2" text-anchor="middle" fill="#555">60%</text><line x1="438.29999999999995" y1="178.3" x2="438.29999999999995" y2="183.3" stroke="#333" stroke-width="1"/><text x="438.29999999999995" y="201.2" text-anchor="middle" fill="#555">80%</text><text x="96" y="60.2" text-anchor="end" fill="#333">适老化改造</text><text x="109.5" y="60.2" fill="#333">0%</text><text x="96" y="70.8" text-anchor="end" fill="#333">适老化改造</text><text x="109.5" y="70.8" fill="#333">0%</text><text x="96" y="81.4" text-anchor="end" fill="#333">2021年改造</text><text x="109.5" y="81.4" fill="#333">0%</text><text x="96" y="91.9" text-anchor="end" fill="#333">居家医养照护</text><text x="109.5" y="91.9" fill="#333">0%</text><text x="96" y="102.5" text-anchor="end" fill="#333">居家服务</text><text x="109.5" y="102.5" fill="#333">0%</text><text x="96" y="113.1" text-anchor="end" fill="#333">精神娱乐</text><text x="109.5" y="113.1" fill="#333">0%</text><text x="96" y="123.7" text-anchor="end" fill="#333">智能监测</text><text x="109.5" y="123.7" fill="#333">0%</text><text x="96" y="134.3" text-anchor="end" fill="#333">医康服务</text><text x="109.5" y="134.3" fill="#333">0%</text><text x="96" y="144.9" text-anchor="end" fill="#333">服务餐厅</text><text x="109.5" y="144.9" fill="#333">0%</text><text x="96" y="155.4" text-anchor="end" fill="#333">生活照料</text><rect x="104.5" y="148.6" width="314.2" height="6.4" fill="#8674a6"/><text x="423.7" y="155.4" fill="#333">75.18%</text><text x="96" y="166.0" text-anchor="end" fill="#333">线上商超</text><rect x="104.5" y="159.2" width="82.4" height="6.4" fill="#8674a6"/><text x="191.9" y="166.0" fill="#333">19.71%</text><text x="96" y="176.6" text-anchor="end" fill="#333">上门护理</text><rect x="104.5" y="169.8" width="21.4" height="6.4" fill="#8674a6"/><text x="130.9" y="176.6" fill="#333">5.11%</text></svg></div>
<div class="a panel" style="left:1173px;top:245px;width:498px;height:290px"><div class="ph"><svg width="40" height="38" style="left:-1px;top:-1px"><path d="M17.5 13.5 V20.5 H24.5 A7 7 0 1 1 17.5 13.5 Z" fill="#777"/><path d="M19 13 A7 7 0 0 1 25 19 H19 Z" fill="#777"/></svg><b style="left:31px">民政购买分类统计</b></div><svg width="498" height="290" style="position:absolute;left:0;top:0" font-family="Liberation Sans, sans-serif" font-size="12"><line x1="227.29999999999995" y1="62.5" x2="227.29999999999995" y2="251.5" stroke="#ccc" stroke-width="1"/><line x1="297.20000000000005" y1="62.5" x2="297.20000000000005" y2="251.5" stroke="#ccc" stroke-width="1"/><line x1="368.5" y1="62.5" x2="368.5" y2="251.5" stroke="#ccc" stroke-width="1"/><line x1="438.4000000000001" y1="62.5" x2="438.4000000000001" y2="251.5" stroke="#ccc" stroke-width="1"/><line x1="156.0999999999999" y1="62.5" x2="156.0999999999999" y2="252.0" stroke="#333" stroke-width="1"/><line x1="156.0999999999999" y1="251.5" x2="438.9000000000001" y2="251.5" stroke="#333" stroke-width="1"/><line x1="151.0999999999999" y1="62.50" x2="156.0999999999999" y2="62.50" stroke="#333" stroke-width="1"/><line x1="151.0999999999999" y1="79.68" x2="156.0999999999999" y2="79.68" stroke="#333" stroke-width="1"/><line x1="151.0999999999999" y1="96.86" x2="156.0999999999999" y2="96.86" stroke="#333" stroke-width="1"/><line x1="151.0999999999999" y1="114.05" x2="156.0999999999999" y2="114.05" stroke="#333" stroke-width="1"/><line x1="151.0999999999999" y1="131.23" x2="156.0999999999999" y2="131.23" stroke="#333" stroke-width="1"/><line x1="151.0999999999999" y1="148.41" x2="156.0999999999999" y2="148.41" stroke="#333" stroke-width="1"/><line x1="151.0999999999999" y1="165.59" x2="156.0999999999999" y2="165.59" stroke="#333" stroke-width="1"/><line x1="151.0999999999999" y1="182.77" x2="156.0999999999999" y2="182.77" stroke="#333" stroke-width="1"/><line x1="151.0999999999999" y1="199.95" x2="156.0999999999999" y2="199.95" stroke="#333" stroke-width="1"/><line x1="151.0999999999999" y1="217.14" x2="156.0999999999999" y2="217.14" stroke="#333" stroke-width="1"/><line x1="151.0999999999999" y1="234.32" x2="156.0999999999999" y2="234.32" stroke="#333" stroke-width="1"/><line x1="151.0999999999999" y1="251.50" x2="156.0999999999999" y2="251.50" stroke="#333" stroke-width="1"/><line x1="156.0999999999999" y1="251.5" x2="156.0999999999999" y2="256.5" stroke="#333" stroke-width="1"/><text x="156.0999999999999" y="274.9" text-anchor="middle" fill="#555">0%</text><line x1="227.29999999999995" y1="251.5" x2="227.29999999999995" y2="256.5" stroke="#333" stroke-width="1"/><text x="227.29999999999995" y="274.9" text-anchor="middle" fill="#555">10%</text><line x1="297.20000000000005" y1="251.5" x2="297.20000000000005" y2="256.5" stroke="#333" stroke-width="1"/><text x="297.20000000000005" y="274.9" text-anchor="middle" fill="#555">20%</text><line x1="368.5" y1="251.5" x2="368.5" y2="256.5" stroke="#333" stroke-width="1"/><text x="368.5" y="274.9" text-anchor="middle" fill="#555">30%</text><line x1="438.4000000000001" y1="251.5" x2="438.4000000000001" y2="256.5" stroke="#333" stroke-width="1"/><text x="438.4000000000001" y="274.9" text-anchor="middle" fill="#555">40%</text><text x="148.5" y="74.7" text-anchor="end" fill="#333" stroke="#333" stroke-width="0.35">助洁</text><text x="161.6" y="74.7" fill="#333">0%</text><text x="148.5" y="91.9" text-anchor="end" fill="#333">2021年适老化改造项目</text><text x="161.6" y="91.9" fill="#333">0%</text><text x="148.5" y="109.1" text-anchor="end" fill="#333">居家医养照护</text><rect x="156.5999999999999" y="100.2" width="108.5" height="10.6" fill="#3797db"/><text x="270.1" y="109.1" fill="#333">15.38%</text><text x="148.5" y="126.2" text-anchor="end" fill="#333">居家医养照护</text><text x="161.6" y="126.2" fill="#333">0%</text><text x="148.5" y="143.4" text-anchor="end" fill="#333">助医服务</text><rect x="156.5999999999999" y="134.5" width="67.9" height="10.6" fill="#3797db"/><text x="229.5" y="143.4" fill="#333">9.62%</text><text x="148.5" y="160.6" text-anchor="end" fill="#333">助行服务</text><text x="161.6" y="160.6" fill="#333">0%</text><text x="148.5" y="177.8" text-anchor="end" fill="#333">维修服务</text><rect x="156.5999999999999" y="168.9" width="95.0" height="10.6" fill="#3797db"/><text x="256.6" y="177.8" fill="#333">13.46%</text><text x="148.5" y="195.0" text-anchor="end" fill="#333">补贴对象</text><text x="161.6" y="195.0" fill="#333">0%</text><text x="148.5" y="212.1" text-anchor="end" fill="#333">助购服务</text><rect x="156.5999999999999" y="203.2" width="27.2" height="10.6" fill="#3797db"/><text x="188.8" y="212.1" fill="#333">3.85%</text><text x="148.5" y="229.3" text-anchor="end" fill="#333">助浴服务</text><rect x="156.5999999999999" y="220.4" width="149.3" height="10.6" fill="#3797db"/><text x="310.9" y="229.3" fill="#333">21.15%</text><text x="148.5" y="246.5" text-anchor="end" fill="#333">助餐服务</text><rect x="156.5999999999999" y="237.6" width="257.9" height="10.6" fill="#3797db"/><text x="419.5" y="246.5" fill="#333">36.54%</text></svg></div>
<div class="a panel" style="left:10px;top:245px;width:1149px;height:290px"><div class="ph"><svg width="40" height="38" style="left:-1px;top:-1px"><path d="M11.5 13.5 V27 H29" fill="none" stroke="#777" stroke-width="1.4"/><path d="M14.5 25 V19.5 M18 25 V15.5 M21.5 25 V18.5 M25 25 V15" stroke="#777" stroke-width="2"/></svg><b style="left:33px">年度老人新增统计</b></div><svg width="1149" height="290" style="position:absolute;left:0;top:0" font-family="Liberation Sans, sans-serif" font-size="12"><defs><linearGradient id="bg1" x1="0" y1="0" x2="0" y2="1"><stop offset="0" stop-color="#9b6fd8"/><stop offset="1" stop-color="#36b0e8"/></linearGradient></defs><line x1="100.60000000000002" y1="67.60000000000002" x2="100.60000000000002" y2="238" stroke="#aaa" stroke-width="1"/><line x1="1058.5" y1="67.60000000000002" x2="1058.5" y2="238" stroke="#aaa" stroke-width="1"/><line x1="100.60000000000002" y1="238" x2="1058.5" y2="238" stroke="#aaa" stroke-width="1.2"/><line x1="95.60000000000002" y1="216.8" x2="100.60000000000002" y2="216.8" stroke="#aaa" stroke-width="1"/><text x="88.19999999999999" y="221.1" text-anchor="end" fill="#aaa">10</text><line x1="95.60000000000002" y1="195.6" x2="100.60000000000002" y2="195.6" stroke="#aaa" stroke-width="1"/><text x="88.19999999999999" y="199.9" text-anchor="end" fill="#aaa">20</text><line x1="95.60000000000002" y1="174.4" x2="100.60000000000002" y2="174.4" stroke="#aaa" stroke-width="1"/><text x="88.19999999999999" y="178.7" text-anchor="end" fill="#aaa">30</text><line x1="95.60000000000002" y1="153.2" x2="100.60000000000002" y2="153.2" stroke="#aaa" stroke-width="1"/><text x="88.19999999999999" y="157.5" text-anchor="end" fill="#aaa">40</text><line x1="95.60000000000002" y1="132.0" x2="100.60000000000002" y2="132.0" stroke="#aaa" stroke-width="1"/><text x="88.19999999999999" y="136.3" text-anchor="end" fill="#aaa">50</text><line x1="95.60000000000002" y1="110.8" x2="100.60000000000002" y2="110.8" stroke="#aaa" stroke-width="1"/><text x="88.19999999999999" y="115.1" text-anchor="end" fill="#aaa">60</text><line x1="95.60000000000002" y1="89.6" x2="100.60000000000002" y2="89.6" stroke="#aaa" stroke-width="1"/><text x="88.19999999999999" y="93.9" text-anchor="end" fill="#aaa">70</text><text x="140.0" y="260.7" text-anchor="middle" fill="#aaa">1月</text><rect x="135.0" y="84.5" width="10" height="153.5" rx="5.0" fill="url(#bg1)"/><text x="219.8" y="260.7" text-anchor="middle" fill="#aaa">2月</text><rect x="214.8" y="232.1" width="10" height="5.9" rx="3.0" fill="url(#bg1)"/><text x="299.6" y="260.7" text-anchor="middle" fill="#aaa">3月</text><rect x="294.6" y="236.3" width="10" height="1.7" rx="0.8" fill="url(#bg1)"/><text x="379.4" y="260.7" text-anchor="middle" fill="#aaa">4月</text><text x="459.2" y="260.7" text-anchor="middle" fill="#aaa">5月</text><rect x="454.2" y="229.9" width="10" height="8.1" rx="4.0" fill="url(#bg1)"/><text x="539.0" y="260.7" text-anchor="middle" fill="#aaa">6月</text><rect x="534.0" y="232.5" width="10" height="5.5" rx="2.8" fill="url(#bg1)"/><text x="618.8" y="260.7" text-anchor="middle" fill="#aaa">7月</text><text x="698.6" y="260.7" text-anchor="middle" fill="#aaa">8月</text><text x="778.4" y="260.7" text-anchor="middle" fill="#aaa">9月</text><text x="858.2" y="260.7" text-anchor="middle" fill="#aaa">10月</text><text x="938.0" y="260.7" text-anchor="middle" fill="#aaa">11月</text><text x="1017.8" y="260.7" text-anchor="middle" fill="#aaa">12月</text><rect x="540.5" y="63" width="25.4" height="14" rx="3" fill="url(#bg1)"/><text x="570" y="72.8" fill="#aaa">老人数</text></svg></div>
<div class="a panel" style="left:10px;top:549px;width:575px;height:293px"><div class="ph" style="color:#333"><svg width="40" height="38" style="left:-1px;top:-1px"><g fill="#777"><circle cx="12.5" cy="23.5" r="2"/><path d="M10.5 13 A12.5 12.5 0 0 1 23 25.5 H20.5 A10 10 0 0 0 10.5 15.5 Z"/><path d="M10.5 17.5 A8 8 0 0 1 18.5 25.5 H16 A5.5 5.5 0 0 0 10.5 20 Z"/></g></svg><b style="left:27px">通知公告 <small style="font-size:10px">&gt;</small></b></div><div class="li" style="left:10px;top:49.0px">【公告】民政部：关于印发《养老服务补贴津贴管理实施办法》的通知</div><div class="dt" style="left:468.1px;width:90px;top:49.0px">2020-12-21</div><div class="li" style="left:10px;top:75.9px">【公告】民政部 财政部关于进一步做好困难群众基本生活保障工作的通知</div><div class="dt" style="left:468.1px;width:90px;top:75.9px">2020-11-03</div><div class="li" style="left:10px;top:102.8px">【公告】关于成立首届<q1>“</q1>民政部社会事务工作专家委员会<q2>”</q2>的公告</div><div class="dt" style="left:468.1px;width:90px;top:102.8px">2020-11-03</div><div class="li" style="left:10px;top:129.7px">【公告】民政部养老服务司关于征集养老服务专家的公告</div><div class="dt" style="left:468.1px;width:90px;top:129.7px">2020-11-03</div><div class="li" style="left:10px;top:156.6px">【公告】居家养老服务中心等级管理及评定办法</div><div class="dt" style="left:468.1px;width:90px;top:156.6px">2020-08-05</div></div>
<div class="a panel" style="left:598px;top:549px;width:561px;height:293px"><div class="ph" style="color:#333"><svg width="40" height="38" style="left:-1px;top:-1px"><g fill="none" stroke="#666" stroke-width="1.3"><rect x="11" y="18" width="3" height="8.5"/><path d="M14 18 L17.5 14 Q18 11.5 19.5 12 Q21 13 20.5 15.5 L19.8 17.5 H23.5 Q25 18 24.5 19.5 L22.5 25.5 Q22 26.5 21 26.5 H14"/></g></svg><b style="left:29.8px">知识库<small style="font-size:10px">&gt;</small></b></div><div class="li" style="left:9.799999999999955px;top:49.0px">跟着总书记领悟党的宝贵经验——坚持独立自主</div><div class="dt" style="left:454.70000000000005px;width:90px;top:49.0px">2021-11-18</div><div class="li" style="left:9.799999999999955px;top:75.9px">老年人如何健康养生？6个易学小妙招来帮忙！</div><div class="dt" style="left:454.70000000000005px;width:90px;top:75.9px">2021-03-26</div><div class="li" style="left:9.799999999999955px;top:102.8px">冠心病是什么？什么是冠心病的一级预防和二级预防?</div><div class="dt" style="left:454.70000000000005px;width:90px;top:102.8px">2021-03-26</div><div class="li" style="left:9.799999999999955px;top:129.7px">老年慢性病患者科学配餐六大原则核心推荐</div><div class="dt" style="left:454.70000000000005px;width:90px;top:129.7px">2021-03-26</div><div class="li" style="left:9.799999999999955px;top:156.6px">老年糖尿病患者饮食治疗的注意事项</div><div class="dt" style="left:454.70000000000005px;width:90px;top:156.6px">2021-03-26</div><div class="li" style="left:9.799999999999955px;top:183.5px">中老年人要注意这样养生</div><div class="dt" style="left:454.70000000000005px;width:90px;top:183.5px">2021-03-01</div></div>
<div class="a panel" style="left:1173px;top:549px;width:498px;height:293px"><div class="ph" style="color:#333"><svg width="40" height="38" style="left:-1px;top:-1px"><path d="M10.5 22.5 L26.5 12 L23 28 L18 25 L16 28.5 L15.5 24 Z" fill="#777"/><path d="M15.5 24 L26.5 12" stroke="#fff" stroke-width="0.8"/></svg><b style="left:30.5px">新闻中心 <small style="font-size:10px">&gt;</small></b></div><div class="li" style="left:9px;top:49.0px">【业务新闻】上好<q1>“</q1>开学第一课<q2>”</q2>让理想之光照亮奋进之路</div><div class="dt" style="left:391.20000000000005px;width:90px;top:49.0px">2021-09-02</div><div class="li" style="left:9px;top:75.9px">【业务新闻】【央广网评】青春无悔 老兵不朽</div><div class="dt" style="left:391.20000000000005px;width:90px;top:75.9px">2021-09-02</div><div class="li" style="left:9px;top:102.8px">【业务新闻】有温度的<q1>“</q1>智慧医养<q2>”</q2>养老新模式：杭城老人的幸福<q1>“</q1>养老经<q2>”</q2></div><div class="li" style="left:9px;top:129.7px">【业务新闻】杭州日报：社区办公用房<q1>“</q1>变身<q2>”</q2>居家养老中心 江干让家门口养老托起百姓</div><div class="dt" style="left:391.20000000000005px;width:90px;top:129.7px">2021-09-02</div><div class="li" style="left:9px;top:156.6px">【业务新闻】暖冬好<q1>“</q1>粥<q2>”</q2>到 | 和康医养杭州区域医养服务中心开展腊八节送温暖活动</div><div class="dt" style="left:391.20000000000005px;width:90px;top:156.6px">2021-01-26</div><div class="li" style="left:9px;top:183.5px">【业务新闻】李克强：推动社会力量成为发展养老服务业的<q1>“</q1>主角<q2>”</q2></div><div class="dt" style="left:391.20000000000005px;width:90px;top:183.5px">2021-03-26</div></div>
<!--/PANELS-->
</div>
<div id="sbar" class="a" style="left:1894px;top:175px;width:2px;height:670px;background:#6d6d6d"></div>
<div class="a" style="left:1894px;top:845px;width:2px;height:52px;background:#ddd"></div>
</body></html>
